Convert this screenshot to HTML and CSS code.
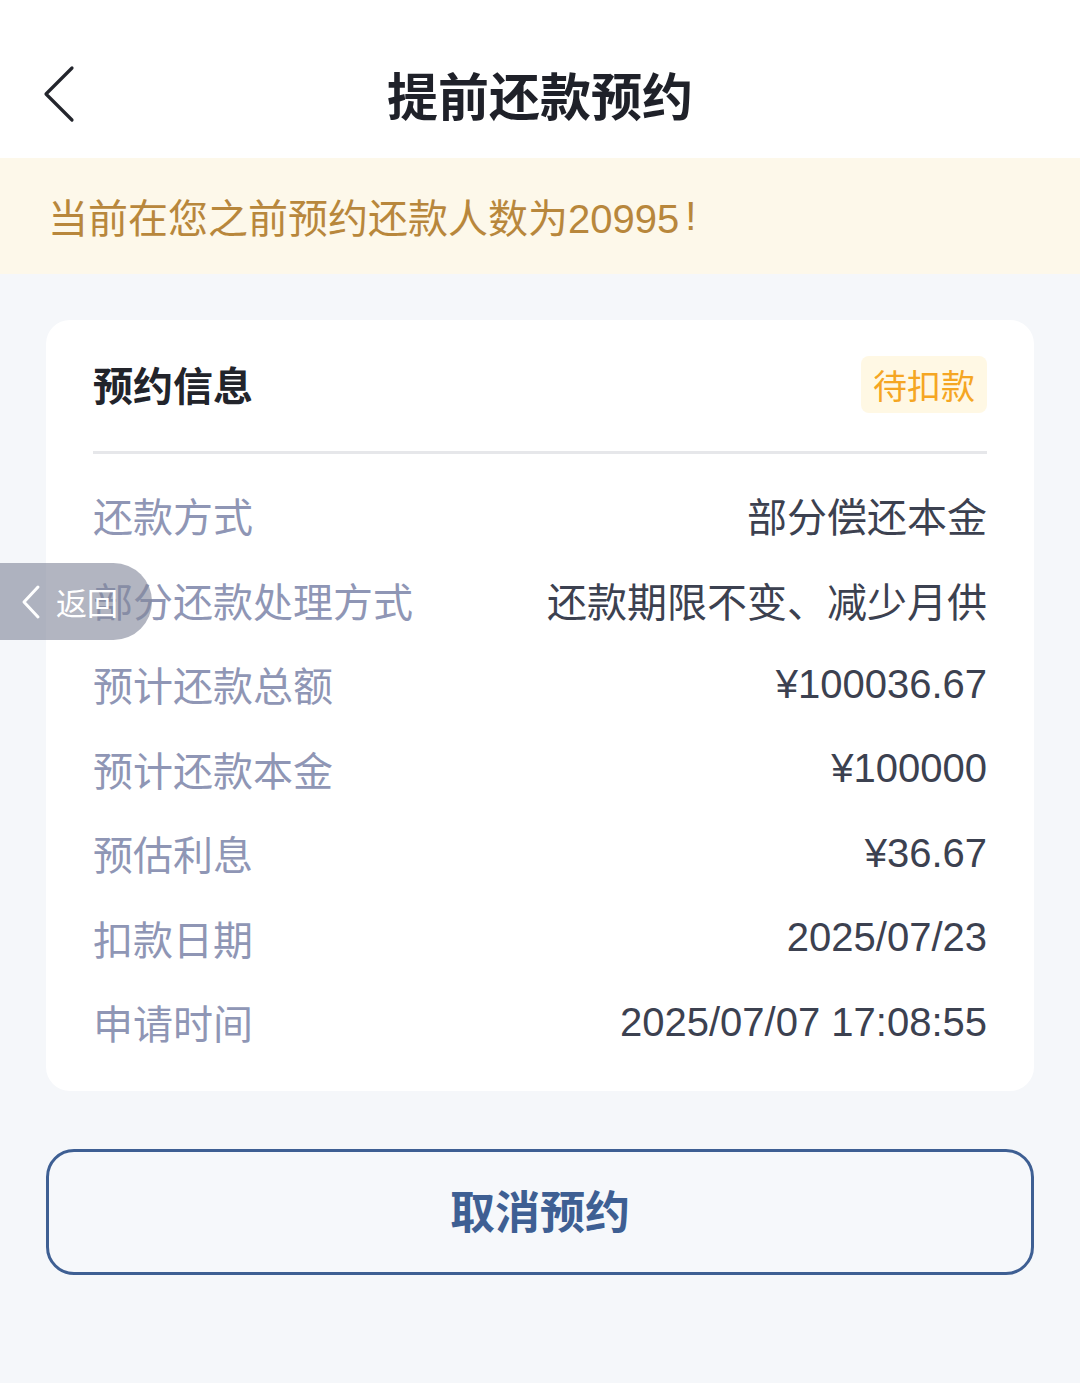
FILE: index.html
```html
<!DOCTYPE html>
<html lang="zh-CN">
<head>
<meta charset="utf-8">
<title>提前还款预约</title>
<link rel="stylesheet" href="styles.css">
</head>
<body>
<div class="page">
  <header class="nav">
    <svg class="nav-back" width="36" height="60" viewBox="0 0 36 60"><path d="M30 4 L4 30 L30 56" fill="none" stroke="#23252c" stroke-width="3.2" stroke-linecap="round" stroke-linejoin="round"/></svg>
    <h1 class="nav-title">提前还款预约</h1>
  </header>
  <div class="notice">当前在您之前预约还款人数为20995<span class="excl">!</span></div>
  <main class="content">
    <section class="card">
      <div class="card-head">
        <h2 class="card-title">预约信息</h2>
        <span class="badge">待扣款</span>
      </div>
      <div class="divider"></div>
      <div class="rows">
        <div class="row"><span class="label">还款方式</span><span class="value">部分偿还本金</span></div>
        <div class="row"><span class="label">部分还款处理方式</span><span class="value">还款期限不变、减少月供</span></div>
        <div class="row"><span class="label">预计还款总额</span><span class="value">¥100036.67</span></div>
        <div class="row"><span class="label">预计还款本金</span><span class="value">¥100000</span></div>
        <div class="row"><span class="label">预估利息</span><span class="value">¥36.67</span></div>
        <div class="row"><span class="label">扣款日期</span><span class="value">2025/07/23</span></div>
        <div class="row"><span class="label">申请时间</span><span class="value">2025/07/07 17:08:55</span></div>
      </div>
    </section>
    <button class="cancel-btn">取消预约</button>
  </main>
  <div class="float-back">
    <svg width="20" height="36" viewBox="0 0 20 36"><path d="M17 3 L3 18 L17 33" fill="none" stroke="#ffffff" stroke-width="3" stroke-linecap="round" stroke-linejoin="round"/></svg>
    <span>返回</span>
  </div>
</div>
</body>
</html>
```
FILE: styles.css
```css
* { box-sizing: border-box; }
html, body { margin: 0; padding: 0; }
body {
  font-family: "Liberation Sans", "Noto Sans CJK SC", sans-serif;
  background: #f5f7fa;
  width: 1080px;
  height: 1383px;
  overflow: hidden;
}
.page { position: relative; width: 1080px; height: 1383px; }
.nav {
  height: 158px;
  background: #ffffff;
  display: flex;
  align-items: center;
  justify-content: center;
  position: relative;
}
.nav-back { position: absolute; left: 42px; top: 64px; }
.nav-title {
  margin: 0;
  margin-top: 30px;
  font-size: 51px;
  font-weight: 700;
  color: #1f2129;
}
.notice {
  height: 116px;
  background: #fdf8ea;
  color: #b8873c;
  font-size: 40px;
  padding-left: 48px;
  display: flex;
  align-items: center;
}
.excl { margin-left: 6px; }
.content { padding: 46px 46px 0 46px; }
.card {
  background: #ffffff;
  border-radius: 24px;
  padding: 0 47px 26px 47px;
}
.card-head {
  height: 131px;
  display: flex;
  align-items: center;
  justify-content: space-between;
  padding-bottom: 3px;
}
.card-title {
  margin: 0;
  font-size: 40px;
  font-weight: 700;
  color: #22242b;
}
.badge {
  height: 57px;
  padding: 0 12px;
  background: #fff8e4;
  color: #f5a623;
  font-size: 34px;
  border-radius: 8px;
  display: flex;
  align-items: center;
}
.divider { height: 3px; background: #e6e7ea; }
.rows { padding-top: 19px; }
.row {
  height: 84.5px;
  display: flex;
  align-items: center;
  justify-content: space-between;
  font-size: 40px;
}
.label { color: #8f96b5; }
.value { color: #3c4150; }
.cancel-btn {
  display: flex;
  align-items: center;
  justify-content: center;
  width: 988px;
  height: 126px;
  margin-top: 58px;
  background: #f6f8fb;
  border: 3px solid #3e5f93;
  border-radius: 28px;
  color: #3e5f93;
  font-family: "Liberation Sans", "Noto Sans CJK SC", sans-serif;
  font-size: 45px;
  font-weight: 700;
  padding: 0 0 4px 0;
}
.float-back {
  position: absolute;
  left: 0;
  top: 563px;
  width: 152px;
  height: 77px;
  border-radius: 0 39px 39px 0;
  background: rgba(130, 135, 155, 0.62);
  display: flex;
  align-items: center;
  padding-left: 21px;
  gap: 15px;
  color: #ffffff;
  font-size: 31px;
}
```
